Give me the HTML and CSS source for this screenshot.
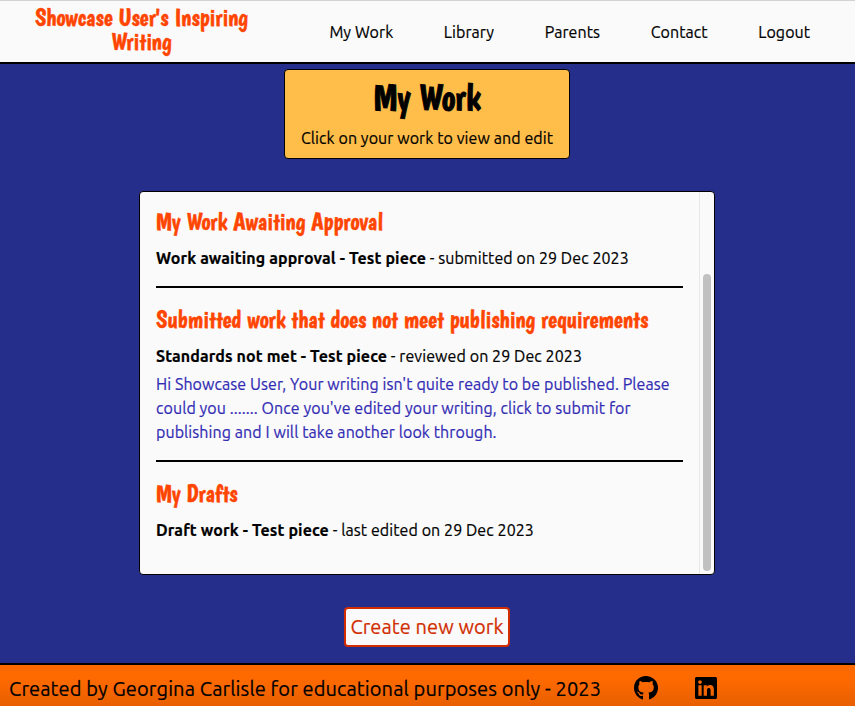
FILE: index.html
```html
<!DOCTYPE html>
<html lang="en">
<head>
<meta charset="utf-8">
<title>My Work</title>
<link rel="stylesheet" href="styles.css">
</head>
<body>
<header class="site-header">
  <a class="brand">Showcase User's Inspiring<br>Writing</a>
  <nav class="nav">
    <a>My Work</a><a>Library</a><a>Parents</a><a>Contact</a><a>Logout</a>
  </nav>
</header>
<main class="main">
  <section class="hero">
    <h1>My Work</h1>
    <p>Click on your work to view and edit</p>
  </section>
  <section class="panel">
    <div class="panel-content">
      <article class="group">
        <h2>My Work Awaiting Approval</h2>
        <p><strong>Work awaiting approval - Test piece</strong> - submitted on 29 Dec 2023</p>
      </article>
      <article class="group">
        <h2>Submitted work that does not meet publishing requirements</h2>
        <p><strong>Standards not met - Test piece</strong> - reviewed on 29 Dec 2023</p>
        <p class="feedback">Hi Showcase User, Your writing isn't quite ready to be published. Please could you ....... Once you've edited your writing, click to submit for publishing and I will take another look through.</p>
      </article>
      <article class="group">
        <h2>My Drafts</h2>
        <p><strong>Draft work - Test piece</strong> - last edited on 29 Dec 2023</p>
      </article>
    </div>
    <div class="track"><div class="thumb"></div></div>
  </section>
  <button class="create">Create new work</button>
</main>
<footer class="site-footer">
  <p>Created by Georgina Carlisle for educational purposes only - 2023</p>
  <svg class="github" viewBox="0 0 496 496" aria-hidden="true"><path d="M165.900 389.400c0 2-2.300 3.600-5.200 3.600-3.300.3-5.600-1.300-5.600-3.600 0-2 2.300-3.600 5.200-3.600 3-.3 5.600 1.300 5.600 3.600zm-31.100-4.500c-.7 2 1.300 4.300 4.300 4.900 2.600 1 5.600 0 6.200-2s-1.300-4.300-4.300-5.200c-2.600-.7-5.500.3-6.200 2.300zM244.800 0C106.100 0 0 105.300 0 244c0 110.900 69.800 205.800 169.500 239.200 12.800 2.300 17.300-5.600 17.300-12.100 0-6.200-.3-40.400-.3-61.400 0 0-70 15-84.700-29.800 0 0-11.400-29.100-27.800-36.600 0 0-22.900-15.700 1.600-15.400 0 0 24.900 2 38.600 25.800 21.900 38.600 58.600 27.500 72.900 20.900 2.300-16 8.800-27.100 16-33.700-55.900-6.200-112.300-14.300-112.300-110.500 0-27.500 7.600-41.300 23.600-58.900-2.600-6.500-11.100-33.300 2.600-67.900 20.900-6.500 69 27 69 27 20-5.600 41.500-8.500 62.800-8.500s42.800 2.900 62.800 8.500c0 0 48.100-33.600 69-27 13.700 34.700 5.200 61.400 2.600 67.900 16 17.700 25.800 31.500 25.800 58.900 0 96.500-58.900 104.200-114.800 110.500 9.200 7.900 17 22.900 17 46.400 0 33.700-.3 75.400-.3 83.600 0 6.500 4.600 14.400 17.300 12.100C428.200 449.800 496 354.900 496 244 496 105.300 383.500 0 244.800 0z"/></svg>
  <svg class="linkedin" viewBox="0 0 448 448" aria-hidden="true"><path d="M416 0H31.900C14.300 0 0 14.500 0 32.300v383.400C0 433.500 14.300 448 31.900 448H416c17.600 0 32-14.500 32-32.300V32.300C448 14.500 433.600 0 416 0zM135.400 384H69V170.200h66.500V384zM102.200 141c-21.300 0-38.500-17.300-38.500-38.500S80.900 64 102.200 64c21.200 0 38.500 17.300 38.500 38.500S123.500 141 102.200 141zm282.100 243h-66.400V280c0-24.800-.5-56.700-34.500-56.700-34.600 0-39.900 27-39.900 54.900V384h-66.400V170.200h63.700v29.200h.9c8.900-16.800 30.600-34.500 62.900-34.500 67.200 0 79.700 44.300 79.700 101.900z"/></svg>
</footer>
</body>
</html>
```
FILE: styles.css
```css
* { box-sizing: border-box; margin: 0; }

body {
  height: 706px;
  display: flex;
  flex-direction: column;
  overflow: hidden;
  background: #252e8b;
  color: #000;
  font: 16px/24px Ubuntu, "Noto Sans", sans-serif;
  font-feature-settings: "liga";
  letter-spacing: 0.08px;
  -webkit-text-stroke-width: 0.2px;
}

strong { letter-spacing: 0.11px; }

.brand, h1, h2 {
  font-family: Boogaloo, "Open Sans", sans-serif;
  font-weight: 400;
  letter-spacing: 0;
  -webkit-text-stroke-width: 0.45px;
}

.site-header {
  height: 64px;
  flex: none;
  display: flex;
  align-items: center;
  background: #fafafa;
  border-top: 1px solid #d2d2d2;
  border-bottom: 2px solid #000;
}

.brand {
  width: 283px;
  text-align: center;
  color: #ff4500;
  font-size: 24px;
  padding-bottom: 3px;
}

.nav { display: flex; gap: 50.5px; margin-left: 46.4px; padding-top: 1px; }

.main {
  flex: 1;
  display: flex;
  flex-direction: column;
  align-items: center;
  padding-right: 1px;
}

.hero {
  width: 286px;
  height: 90px;
  margin-top: 5px;
  padding-top: 8px;
  text-align: center;
  background: #ffbd4a;
  border: 1px solid #000;
  border-radius: 4px;
}

h1 {
  font-size: 36px;
  line-height: 40px;
  margin-bottom: 8px;
  -webkit-text-stroke-width: 0.9px;
}

.panel {
  display: flex;
  width: 576px;
  height: 384px;
  margin-top: 32px;
  background: #fafafa;
  border: 1px solid #000;
  border-radius: 4px;
}

.panel-content { flex: 1; padding: 0 16px; }

.group { padding: 16px 0; }
.group + .group { padding-top: 18px; border-top: 2px solid #000; }

h2 {
  color: #ff4500;
  font-size: 24px;
  line-height: 28px;
  margin-bottom: 10px;
}

.feedback { margin-top: 4px; color: #322cb4; }

.track {
  width: 15px;
  padding: 82px 3px 3px;
  border-left: 1px solid #e8e8e8;
}
.thumb { width: 8px; height: 297px; border-radius: 4px; background: #c1c1c1; }

.create {
  width: 166px;
  height: 40px;
  margin-top: 32px;
  padding: 0;
  font: 20px/24px Ubuntu, "Noto Sans", sans-serif;
  letter-spacing: 0.08px;
  color: #d22d00;
  background: #fafafa;
  border: 2px solid #d22d00;
  border-radius: 4px;
  -webkit-text-stroke-width: 0.2px;
}

.site-footer {
  height: 43px;
  flex: none;
  display: flex;
  align-items: center;
  padding: 5px 0 0 9px;
  font-size: 20px;
  letter-spacing: 0.12px;
  border-top: 2px solid #000;
  background: linear-gradient(#ff6a00 30%, #e85f00);
}
.site-footer p { padding-top: 2px; }
.github { width: 24px; height: 24px; margin-left: 32.5px; }
.linkedin { width: 22px; height: 22px; margin-left: 37px; }
```
